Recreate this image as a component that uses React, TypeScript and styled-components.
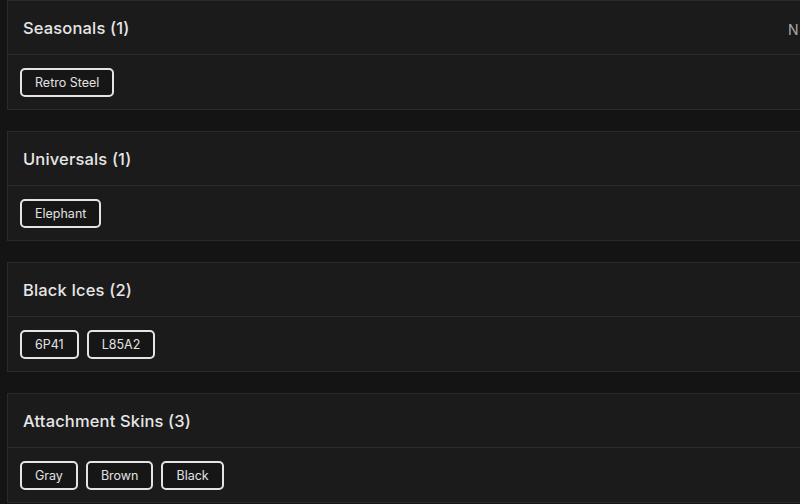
import React from "react";
import styled, { createGlobalStyle } from "styled-components";

const Global = createGlobalStyle`
  html, body {
    margin: 0;
    padding: 0;
    background: #141414;
    overflow: hidden;
  }
  body {
    font-family: Inter, "Open Sans", "DejaVu Sans", sans-serif;
  }
`;

const Page = styled.div`
  width: 800px;
  height: 504px;
  overflow: hidden;
  background: #141414;
  padding-left: 7px;
  box-sizing: border-box;
`;

const List = styled.div`
  display: flex;
  flex-direction: column;
  gap: 21px;
  width: 915px;
`;

const Card = styled.section`
  background: #1b1b1b;
  border: 1px solid #2a2a2a;
  box-sizing: border-box;
  height: 110px;
  display: flex;
  flex-direction: column;
`;

const Header = styled.div`
  height: 54px;
  box-sizing: border-box;
  border-bottom: 1px solid #2c2c2c;
  display: grid;
  grid-template-columns: 1fr 133px;
  align-items: center;
  padding: 0 0 0 15px;
`;

const Title = styled.h2`
  margin: 0;
  font-size: 16.5px;
  font-weight: 500;
  color: #e6e6e6;
  letter-spacing: 0.15px;
`;

const Meta = styled.span`
  font-size: 14px;
  color: #a8a8a8;
  padding-top: 4px;
  white-space: nowrap;
  letter-spacing: 1px;
`;

const Body = styled.div`
  flex: 1;
  display: flex;
  align-items: center;
  gap: 8px;
  padding: 0 12px;
`;

const Chip = styled.span`
  display: inline-flex;
  align-items: center;
  height: 29px;
  box-sizing: border-box;
  padding: 0 13px;
  border: 2px solid #e4e4e4;
  border-radius: 5px;
  background: #161616;
  color: #e2e2e2;
  font-size: 12.5px;
  font-weight: 400;
`;

type Group = { title: string; items: string[]; meta?: string };

const groups: Group[] = [
  { title: "Seasonals (1)", items: ["Retro Steel"], meta: "Not tradable" },
  { title: "Universals (1)", items: ["Elephant"] },
  { title: "Black Ices (2)", items: ["6P41", "L85A2"] },
  { title: "Attachment Skins (3)", items: ["Gray", "Brown", "Black"] },
];

export default function App() {
  return (
    <>
      <Global />
      <Page>
        <List>
          {groups.map((g) => (
            <Card key={g.title}>
              <Header>
                <Title>{g.title}</Title>
                {g.meta ? <Meta>{g.meta}</Meta> : <span />}
              </Header>
              <Body>
                {g.items.map((it) => (
                  <Chip key={it}>{it}</Chip>
                ))}
              </Body>
            </Card>
          ))}
        </List>
      </Page>
    </>
  );
}
